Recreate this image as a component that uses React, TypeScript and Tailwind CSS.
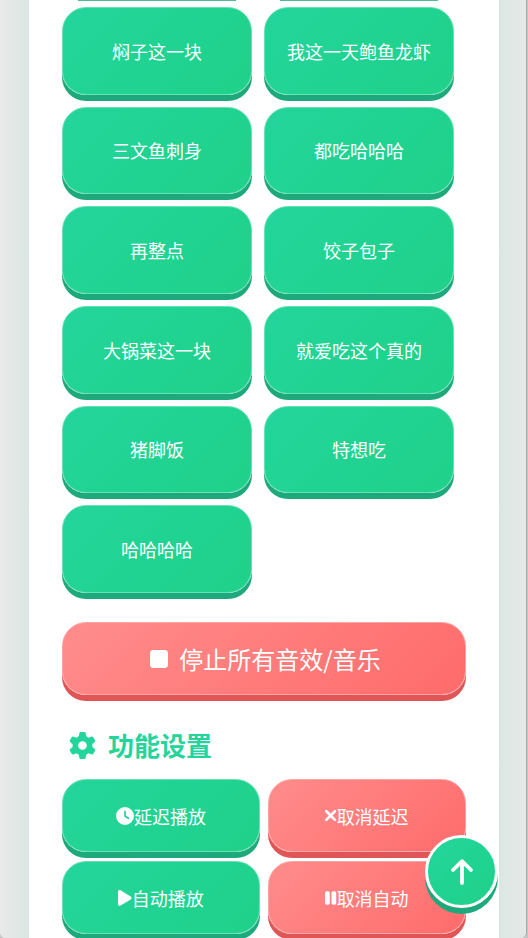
import React from "react";
import { FaClock, FaStop } from "react-icons/fa6";

type IconProps = { className?: string };

const GearIcon = ({ className }: IconProps) => (
  <svg viewBox="-13 -13 26 26" className={className} aria-hidden="true">
    <circle r="6.9" fill="none" stroke="currentColor" strokeWidth="5.4" />
    {[0, 60, 120, 180, 240, 300].map((angle) => (
      <path
        key={angle}
        d="M-3.8 -7.5L-3 -12Q-2.8 -13 -1.8 -13H1.8Q2.8 -13 3 -12L3.8 -7.5z"
        fill="currentColor"
        transform={`rotate(${angle})`}
      />
    ))}
  </svg>
);

const XMarkIcon = ({ className }: IconProps) => (
  <svg viewBox="0 0 320 512" className={className} aria-hidden="true">
    <path
      d="M38 122 282 366M282 122 38 366"
      fill="none"
      stroke="currentColor"
      strokeWidth="76"
      strokeLinecap="round"
    />
  </svg>
);

const PlayIcon = ({ className }: IconProps) => (
  <svg viewBox="0 0 384 512" fill="currentColor" className={className} aria-hidden="true">
    <path d="M361 215C375.3 223.8 384 239.3 384 256C384 272.7 375.3 288.2 361 296.1L73 472.1C58.2 482 39.7 482.4 24.5 473.9C9.4 465.4 0 449.4 0 432V80C0 62.6 9.4 46.6 24.5 38.1C39.7 29.6 58.2 30 73 39L361 215z" />
  </svg>
);

const PauseIcon = ({ className }: IconProps) => (
  <svg viewBox="0 0 320 512" fill="currentColor" className={className} aria-hidden="true">
    <rect x="0" y="63" width="136" height="386" rx="48" />
    <rect x="184" y="63" width="136" height="386" rx="48" />
  </svg>
);

const ArrowUpIcon = ({ className }: IconProps) => (
  <svg viewBox="0 0 24 28" className={className} aria-hidden="true">
    <path
      d="M12 25V3.4M3 12l9-8.8 9 8.8"
      fill="none"
      stroke="currentColor"
      strokeWidth="3.8"
      strokeLinecap="round"
      strokeLinejoin="round"
    />
  </svg>
);

const sounds = [
  "焖子这一块",
  "我这一天鲍鱼龙虾",
  "三文鱼刺身",
  "都吃哈哈哈",
  "再整点",
  "饺子包子",
  "大锅菜这一块",
  "就爱吃这个真的",
  "猪脚饭",
  "特想吃",
  "哈哈哈哈",
];

const actions = [
  { label: "延迟播放", icon: FaClock, danger: false },
  { label: "取消延迟", icon: XMarkIcon, danger: true },
  { label: "自动播放", icon: PlayIcon, danger: false },
  { label: "取消自动", icon: PauseIcon, danger: true },
];

const base =
  "flex items-center justify-center rounded-3xl border font-normal text-white";
const green =
  "border-[#68e1b4] bg-linear-135 from-[#23d59b] to-[#1fd189] bg-origin-border shadow-[0_6px_0_#1ea97c]";
const red =
  "border-[#ffa4a4] bg-linear-135 from-[#ff8c8c] to-[#ff6b6b] bg-origin-border shadow-[0_6px_0_#e05656]";

const App = () => {
  return (
    <div className="bg-[#c4c4c4] pr-px font-['Noto_Sans_CJK_SC',sans-serif]">
      <div className="min-h-screen overflow-hidden rounded-b-md border-r border-[#a8a8a8] bg-linear-to-r from-[#e9e9e9] to-[#e6e8e7]">
        <div className="flex">
          <div className="w-[29px] shrink-0 bg-linear-to-r from-[#e9e9e9] to-[#dae7e2]" />

          <main className="min-h-screen min-w-0 flex-1 bg-white px-[33px] pb-1">
            {/* Tail of the row scrolled off the top */}
            <div className="grid grid-cols-2 gap-x-3 pr-3" aria-hidden="true">
              <div className="mx-4 h-px bg-[#4bbb96]" />
              <div className="mx-4 h-px bg-[#4bbb96]" />
            </div>

            {/* Sound buttons */}
            <div className="mt-[6px] grid h-[586px] grid-cols-2 grid-rows-6 gap-3 pr-3">
              {sounds.map((sound) => (
                <button
                  key={sound}
                  type="button"
                  className={`${base} ${green} text-lg`}
                >
                  {sound}
                </button>
              ))}
            </div>

            <button
              type="button"
              className={`${base} ${red} mt-[29px] h-[73px] w-full gap-2 text-2xl`}
            >
              <FaStop className="h-6 w-auto" />
              停止所有音效/音乐
            </button>

            {/* Settings */}
            <h2 className="mt-[31px] mb-[15px] flex items-center gap-3 pl-[7px] text-[26px] leading-[38px] font-bold text-[#23d59b]">
              <GearIcon className="size-[27px]" />
              功能设置
            </h2>
            <div className="grid grid-cols-2 gap-x-2 gap-y-[9px]">
              {actions.map(({ label, icon: Icon, danger }) => (
                <button
                  key={label}
                  type="button"
                  className={`${base} ${danger ? red : green} h-[73px] text-lg`}
                >
                  <Icon className="h-[18px] w-auto" />
                  {label}
                </button>
              ))}
            </div>
          </main>

          <div className="w-[27px] shrink-0 bg-linear-to-r from-[#dbe7e3] to-[#e6e8e7]" />
        </div>
      </div>

      <button
        type="button"
        aria-label="返回顶部"
        className="fixed right-[30px] bottom-[30px] flex size-[73px] items-center justify-center rounded-full border-3 border-white bg-linear-135 from-[#23d59b] to-[#1fd189] text-white shadow-[0_6px_0_#1ea97c]"
      >
        <ArrowUpIcon className="h-7 w-6" />
      </button>
    </div>
  );
};

export default App;
